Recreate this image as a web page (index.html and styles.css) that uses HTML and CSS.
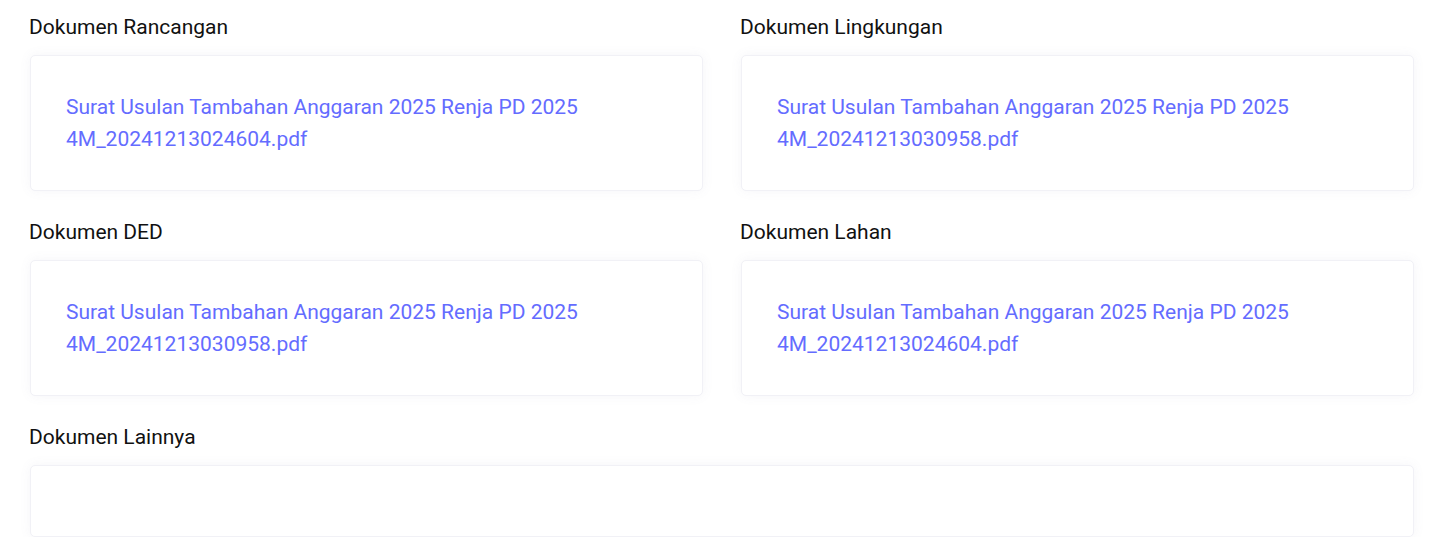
FILE: index.html
```html
<!DOCTYPE html>
<html lang="id">
<head>
<meta charset="utf-8">
<title>Dokumen</title>
<link rel="stylesheet" href="styles.css">
</head>
<body>
<div class="page">
  <div class="grid">
    <section class="field">
      <div class="label">Dokumen Rancangan</div>
      <div class="card"><a class="file" href="#">Surat Usulan Tambahan Anggaran 2025 Renja PD 2025 4M_20241213024604.pdf</a></div>
    </section>
    <section class="field">
      <div class="label">Dokumen Lingkungan</div>
      <div class="card"><a class="file" href="#">Surat Usulan Tambahan Anggaran 2025 Renja PD 2025 4M_20241213030958.pdf</a></div>
    </section>
    <section class="field">
      <div class="label">Dokumen DED</div>
      <div class="card"><a class="file" href="#">Surat Usulan Tambahan Anggaran 2025 Renja PD 2025 4M_20241213030958.pdf</a></div>
    </section>
    <section class="field">
      <div class="label">Dokumen Lahan</div>
      <div class="card"><a class="file" href="#">Surat Usulan Tambahan Anggaran 2025 Renja PD 2025 4M_20241213024604.pdf</a></div>
    </section>
    <section class="field full">
      <div class="label">Dokumen Lainnya</div>
      <div class="card empty"></div>
    </section>
  </div>
</div>
</body>
</html>
```
FILE: styles.css
```css
html, body {
  margin: 0;
  padding: 0;
  background: #ffffff;
}
body {
  font-family: Roboto, "Liberation Sans", sans-serif;
  color: #111111;
}
.page {
  padding: 13px 18px 0 29px;
}
.grid {
  display: grid;
  grid-template-columns: 1fr 1fr;
  column-gap: 37px;
  row-gap: 27px;
}
.field.full {
  grid-column: 1 / -1;
}
.label {
  font-size: 21px;
  line-height: 28px;
  margin-bottom: 14px;
}
.card {
  margin-left: 1px;
  background: #ffffff;
  border: 1px solid #f1f1f6;
  border-radius: 5px;
  box-shadow: 0 0 12px rgba(120, 120, 160, 0.07);
  padding: 35px 36px 35px 35px;
}
.card.empty {
  height: 0;
}
.file {
  display: block;
  max-width: 560px;
  font-size: 21px;
  line-height: 32px;
  color: #646cff;
  text-decoration: none;
}
```
